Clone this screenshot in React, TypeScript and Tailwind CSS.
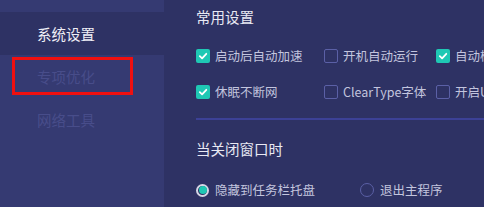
import React from "react";

const font = { fontFamily: '"Noto Sans CJK SC", "Noto Sans", sans-serif' };

function Check({ checked, label }: { checked: boolean; label: string }) {
  return (
    <div className="flex items-center gap-[5px]">
      {checked ? (
        <div className="w-[14px] h-[14px] rounded-[2px] bg-[#1fc8b4] flex items-center justify-center">
          <svg width="10" height="10" viewBox="0 0 10 10">
            <path d="M1.8 5.2 L4.1 7.3 L8.3 2.8" fill="none" stroke="#ffffff" strokeWidth="1.8" strokeLinecap="round" strokeLinejoin="round" />
          </svg>
        </div>
      ) : (
        <div className="w-[14px] h-[14px] rounded-[2px] border border-[#5b60a6] box-border" />
      )}
      <span className="text-[12.5px] leading-[16px] text-[#c3c5de] whitespace-nowrap">{label}</span>
    </div>
  );
}

function Radio({ checked, label }: { checked: boolean; label: string }) {
  return (
    <div className="flex items-center gap-[6px]">
      {checked ? (
        <div className="w-[13px] h-[13px] rounded-full border-[2px] border-[#d6d7e6] box-border flex items-center justify-center">
          <div className="w-[8px] h-[8px] rounded-full bg-[#1fc8b4]" />
        </div>
      ) : (
        <div className="w-[14px] h-[14px] rounded-full border-[1.5px] border-[#5b60a6] box-border" />
      )}
      <span className="text-[12.5px] leading-[16px] text-[#c3c5de] whitespace-nowrap">{label}</span>
    </div>
  );
}

export default function App() {
  return (
    <div className="relative w-[484px] h-[207px] flex overflow-hidden bg-[#2e3264]" style={font}>
      <div className="w-[164px] h-full bg-[#353a72] flex flex-col pt-[12px]">
        <div className="h-[43px] bg-[#2e3264] flex items-center pl-[37px] text-[14.5px] text-[#eeeef6]">系统设置</div>
        <div className="h-[43px] flex items-center pl-[37px] text-[14.5px] text-[#484d8a]">专项优化</div>
        <div className="h-[43px] flex items-center pl-[37px] text-[14.5px] text-[#484d8a]">网络工具</div>
      </div>
      <div className="flex-1 flex flex-col pl-[32px] pt-[7px] min-w-0">
        <div className="text-[14.5px] leading-[20px] text-[#e8e9f3]">常用设置</div>
        <div className="mt-[21px] grid grid-cols-[128px_112px_1fr] gap-y-[20px] whitespace-nowrap">
          <Check checked label="启动后自动加速" />
          <Check checked={false} label="开机自动运行" />
          <Check checked label="自动检测更新" />
          <Check checked label="休眠不断网" />
          <Check checked={false} label="ClearType字体" />
          <Check checked={false} label="开启U盘加速" />
        </div>
        <div className="mt-[18px] h-[2px] bg-[#3c4196]" />
        <div className="mt-[19px] text-[14.5px] leading-[20px] text-[#e8e9f3]">当关闭窗口时</div>
        <div className="mt-[23px] grid grid-cols-[164px_1fr]">
          <Radio checked label="隐藏到任务栏托盘" />
          <Radio checked={false} label="退出主程序" />
        </div>
      </div>
      <div className="absolute left-[12px] top-[57px] w-[121px] h-[38px] border-[3px] border-[#f01010]" />
    </div>
  );
}
